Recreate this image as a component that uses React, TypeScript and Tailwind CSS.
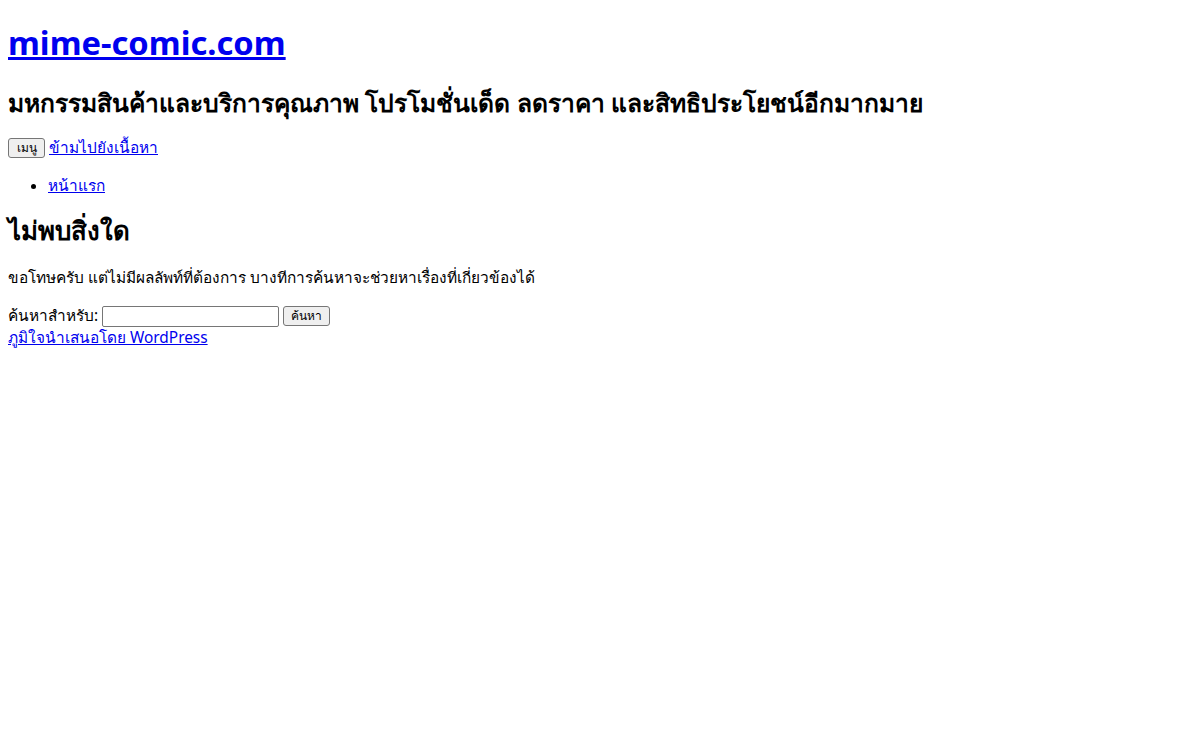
import React from "react";

export default function App() {
  return (
    <div className="min-h-[740px] bg-white px-2 text-[15.4px] text-black font-['Noto_Sans','DejaVu_Sans',sans-serif]">
      <header>
        <h1 className="mt-[21px] mb-[21px] text-[32.7px] font-bold leading-[44px]">
          <a href="#" className="text-[#0000ee] underline">
            mime-comic.com
          </a>
        </h1>
        <h2 className="mb-[18px] text-[24.6px] font-bold leading-[33px]">
          มหกรรมสินค้าและบริการคุณภาพ โปรโมชั่นเด็ด ลดราคา และสิทธิประโยชน์อีกมากมาย
        </h2>
        <nav>
          <div className="flex items-center gap-1 leading-[22px]">
            <button className="h-5 w-[37px] rounded-[3px] border border-[#767676] bg-[#efefef] text-[12px] leading-none">
              เมนู
            </button>
            <a href="#" className="text-[#0000ee] underline">
              ข้ามไปยังเนื้อหา
            </a>
          </div>
          <ul className="my-4 list-disc pl-10 leading-[22px]">
            <li>
              <a href="#" className="text-[#0000ee] underline">
                หน้าแรก
              </a>
            </li>
          </ul>
        </nav>
      </header>
      <main>
        <h2 className="mt-[17px] mb-5 text-[25.8px] font-bold leading-[33px]">ไม่พบสิ่งใด</h2>
        <p className="my-4 leading-[22px]">
          ขอโทษครับ แต่ไม่มีผลลัพท์ที่ต้องการ บางทีการค้นหาจะช่วยหาเรื่องที่เกี่ยวข้องได้
        </p>
        <form className="flex items-center gap-1 leading-[22px]">
          <label>ค้นหาสำหรับ:</label>
          <input
            type="text"
            className="h-[21px] w-[177px] rounded-[2px] border border-[#767676] px-1 text-[13px]"
          />
          <button
            type="button"
            className="h-5 w-[47px] rounded-[3px] border border-[#767676] bg-[#efefef] text-[12px] leading-none"
          >
            ค้นหา
          </button>
        </form>
      </main>
      <footer className="leading-[22px]">
        <a href="#" className="text-[#0000ee] underline">
          ภูมิใจนำเสนอโดย WordPress
        </a>
      </footer>
    </div>
  );
}
